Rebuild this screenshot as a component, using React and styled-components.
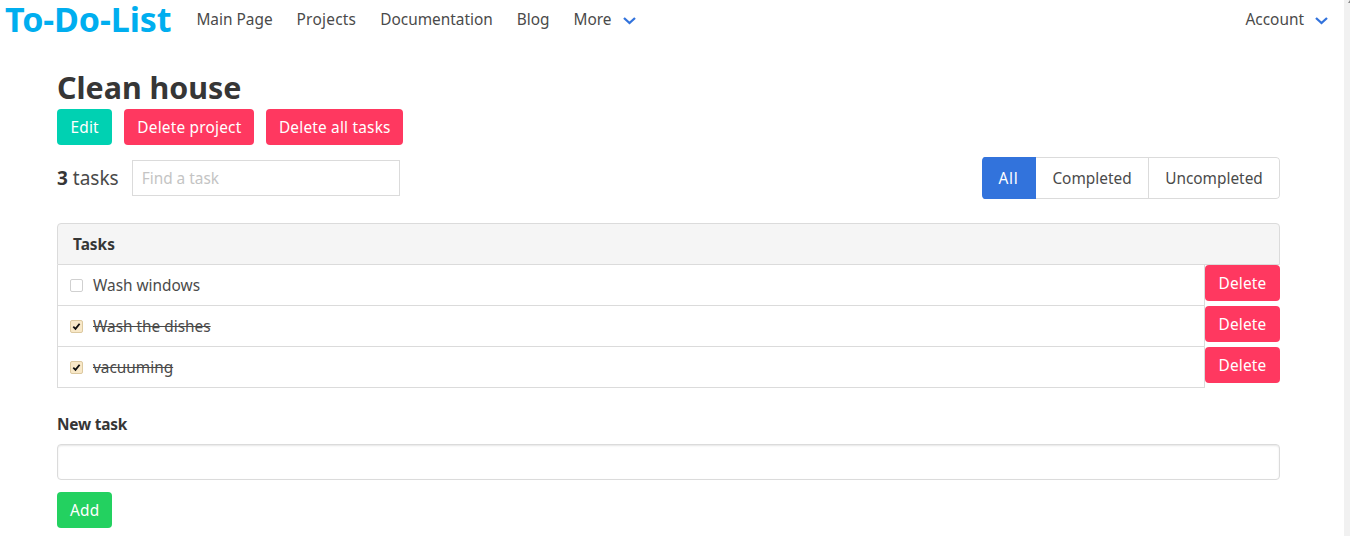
import React from 'react';
import styled, { createGlobalStyle } from 'styled-components';

const GlobalStyle = createGlobalStyle`
  html, body {
    margin: 0;
    height: 536px;
    overflow: hidden;
    background: #fff;
  }
  body {
    font-family: "Noto Sans", "Open Sans", sans-serif;
    font-size: 16px;
    color: #4a4a4a;
  }
  * {
    box-sizing: border-box;
  }
`;

const Page = styled.div`
  display: flex;
  height: 536px;
`;

const Main = styled.div`
  flex: 1;
  min-width: 0;
`;

const ScrollTrack = styled.div`
  width: 6px;
  padding: 0 0 0 4px;
  background: #f1f1f1;
  overflow: hidden;

  &::before {
    content: '';
    display: block;
    width: 0;
    height: 0;
    border-left: 2px solid transparent;
    border-right: 2px solid transparent;
    border-bottom: 3px solid #8a8a8a;
  }
`;

const Navbar = styled.nav`
  display: flex;
  align-items: center;
  height: 38px;
  padding-right: 4px;
`;

const Brand = styled.a`
  font-size: 34px;
  font-weight: 700;
  color: #00aeef;
  line-height: 38px;
  padding-left: 5px;
  margin-right: 13px;
  letter-spacing: -0.1px;
`;

const NavItem = styled.a`
  display: flex;
  align-items: center;
  gap: 11px;
  padding: 2px 12px 0;
  color: #4a4a4a;
  font-size: 15.4px;
  line-height: 36px;
  letter-spacing: ${(p) => p.$spacing || 0}px;
`;

const NavEnd = styled.div`
  margin-left: auto;
`;

const Chevron = () => (
  <svg width="13" height="9" viewBox="0 0 13 9" fill="none">
    <path d="M1 2 L6.5 7 L12 2" stroke="#3273dc" strokeWidth="2.3" />
  </svg>
);

const Container = styled.div`
  padding: 30px 64px 0 57px;
`;

const Title = styled.h1`
  margin: 0;
  font-size: 30.4px;
  font-weight: 700;
  line-height: 40px;
  color: #363636;
`;

const ButtonRow = styled.div`
  display: flex;
  gap: 12px;
  margin-top: 1px;
`;

const Button = styled.button`
  height: 36px;
  padding: 0 ${(p) => p.$px || 13}px;
  border: none;
  border-radius: 4px;
  background: ${(p) => p.$color};
  color: #fff;
  font-family: inherit;
  font-size: 15.4px;
  letter-spacing: 0.2px;
`;

const Toolbar = styled.div`
  display: flex;
  align-items: center;
  margin-top: 12px;
  height: 42px;
`;

const Count = styled.div`
  font-size: 19px;
  color: #4a4a4a;
  margin-right: 13px;

  strong {
    color: #363636;
  }
`;

const FindInput = styled.input`
  width: 268px;
  height: 36px;
  padding: 0 9px;
  border: 1px solid #dbdbdb;
  font-family: inherit;
  font-size: 15.4px;

  &::placeholder {
    color: #c4c4c4;
  }
`;

const Segments = styled.div`
  display: flex;
  margin-left: auto;
  height: 42px;
  border-radius: 4px;
  overflow: hidden;
`;

const Segment = styled.a`
  display: flex;
  align-items: center;
  justify-content: center;
  width: ${(p) => p.$width}px;
  font-size: 15.4px;
  letter-spacing: ${(p) => (p.$active ? 0.8 : 0)}px;
  color: ${(p) => (p.$active ? '#fff' : '#4a4a4a')};
  background: ${(p) => (p.$active ? '#3273dc' : '#fff')};
  border: solid ${(p) => (p.$active ? '#3273dc' : '#dbdbdb')};
  border-width: 1px 1px 1px 0;
  border-radius: ${(p) => (p.$last ? '0 4px 4px 0' : '0')};
`;

const Panel = styled.div`
  margin-top: 24px;
`;

const PanelHeading = styled.div`
  height: 42px;
  padding-left: 15px;
  line-height: 42px;
  font-size: 15.4px;
  font-weight: 700;
  color: #363636;
  background: #f5f5f5;
  border: 1px solid #dbdbdb;
  border-radius: 4px 4px 0 0;
`;

const TaskRow = styled.div`
  display: flex;
  align-items: flex-start;
  height: 41px;
`;

const TaskLabel = styled.label`
  flex: 1;
  display: flex;
  align-items: center;
  gap: 10px;
  height: 41px;
  padding-left: 12px;
  border: 1px solid #dbdbdb;
  border-top: none;
  font-size: 15.4px;
  color: #4a4a4a;
  text-decoration: ${(p) => (p.$done ? 'line-through' : 'none')};
`;

const Check = styled.span`
  display: flex;
  align-items: center;
  justify-content: center;
  width: 13px;
  height: 13px;
  border-radius: 2px;
  border: 1px solid ${(p) => (p.$done ? '#dcc9a0' : '#d0d0d0')};
  background: ${(p) => (p.$done ? '#f8e8c8' : '#fff')};
`;

const DeleteButton = styled(Button)`
  width: 75px;
  padding: 0;
`;

const FieldLabel = styled.div`
  margin-top: 27px;
  font-size: 15.4px;
  font-weight: 700;
  line-height: 20px;
  letter-spacing: -0.2px;
  color: #363636;
`;

const TextInput = styled.input`
  display: block;
  width: 100%;
  height: 36px;
  margin-top: 9px;
  border: 1px solid #dbdbdb;
  border-radius: 4px;
  box-shadow: inset 0 1px 2px rgba(10, 10, 10, 0.1);
`;

const AddRow = styled.div`
  margin-top: 12px;
`;

const tasks = [
  { name: 'Wash windows', done: false },
  { name: 'Wash the dishes', done: true },
  { name: 'vacuuming', done: true },
];

export default function App() {
  return (
    <Page>
      <GlobalStyle />
      <Main>
        <Navbar>
          <Brand>To-Do-List</Brand>
          <NavItem>Main Page</NavItem>
          <NavItem $spacing={0.25}>Projects</NavItem>
          <NavItem>Documentation</NavItem>
          <NavItem>Blog</NavItem>
          <NavItem>More <Chevron /></NavItem>
          <NavEnd>
            <NavItem>Account <Chevron /></NavItem>
          </NavEnd>
        </Navbar>
        <Container>
          <Title>Clean house</Title>
          <ButtonRow>
            <Button $color="#00d1b2" $px={13.5}>Edit</Button>
            <Button $color="#ff3860">Delete project</Button>
            <Button $color="#ff3860" $px={12.5}>Delete all tasks</Button>
          </ButtonRow>
          <Toolbar>
            <Count><strong>3</strong> tasks</Count>
            <FindInput placeholder="Find a task" />
            <Segments>
              <Segment $active $width={54}>All</Segment>
              <Segment $width={113}>Completed</Segment>
              <Segment $last $width={131}>Uncompleted</Segment>
            </Segments>
          </Toolbar>
          <Panel>
            <PanelHeading>Tasks</PanelHeading>
            {tasks.map((t) => (
              <TaskRow key={t.name}>
                <TaskLabel $done={t.done}>
                  <Check $done={t.done}>
                    {t.done && (
                      <svg width="9" height="9" viewBox="0 0 9 9" fill="none">
                        <path d="M1.3 4.6 L3.5 6.8 L7.6 1.8" stroke="#111" strokeWidth="1.8" />
                      </svg>
                    )}
                  </Check>
                  {t.name}
                </TaskLabel>
                <DeleteButton $color="#ff3860">Delete</DeleteButton>
              </TaskRow>
            ))}
          </Panel>
          <FieldLabel>New task</FieldLabel>
          <TextInput />
          <AddRow>
            <Button $color="#23d160">Add</Button>
          </AddRow>
        </Container>
      </Main>
      <ScrollTrack />
    </Page>
  );
}
